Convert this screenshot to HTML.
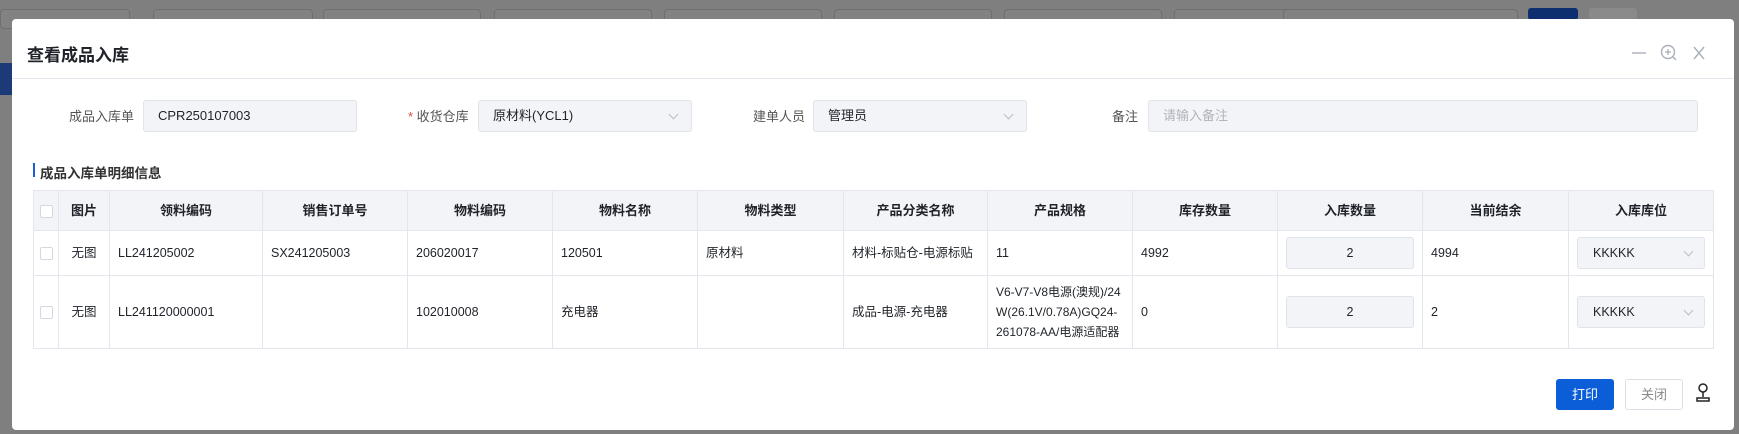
<!DOCTYPE html>
<html><head><meta charset="utf-8"><style>
*{box-sizing:border-box;margin:0;padding:0}
body{width:1739px;height:434px;overflow:hidden;background:#7f7f7f;font-family:"Liberation Sans","Noto Sans CJK SC",sans-serif;position:relative;color:#1f2329}
.a{position:absolute}
.bgbox{position:absolute;top:9px;height:20px;border:1px solid #6f6f6f;border-radius:4px;background:#828282}
.modal{position:absolute;left:12px;top:19px;width:1722px;height:411px;background:#fff;border-radius:4px}
.lbl{position:absolute;font-size:13px;color:#555;top:106px}
.inp{position:absolute;top:100px;height:32px;background:#f3f4f8;border:1px solid #dfe3ea;border-radius:3px;font-size:13px;line-height:30px;padding-left:14px;color:#1f2329}
.chev{position:absolute;width:7px;height:7px;border-right:1px solid #b8bcc4;border-bottom:1px solid #b8bcc4;transform:rotate(45deg)}
table{position:absolute;left:33px;top:190px;width:1680px;border-collapse:collapse;font-size:12.5px;table-layout:fixed}
td,th{border:1px solid #e3e6ec;padding:0 8px;text-align:left;vertical-align:middle;line-height:18px}
th{height:40px;background:#f3f4f8;font-weight:bold;text-align:center;font-size:13px}
.cb{width:13px;height:13px;border:1px solid #d5d8de;border-radius:2px;background:#fff;display:inline-block;vertical-align:middle}
.cell-in{height:32px;background:#f3f4f8;border:1px solid #dfe3ea;border-radius:3px;text-align:center;line-height:30px;position:relative}
</style></head><body>
<div class="bgbox" style="left:0;width:130px"></div>
<div class="bgbox" style="left:153px;width:160px"></div>
<div class="bgbox" style="left:323px;width:158px"></div>
<div class="bgbox" style="left:494px;width:158px"></div>
<div class="bgbox" style="left:664px;width:158px"></div>
<div class="bgbox" style="left:834px;width:158px"></div>
<div class="bgbox" style="left:1004px;width:158px"></div>
<div class="bgbox" style="left:1174px;width:120px"></div>
<div class="bgbox" style="left:1283px;width:235px"></div>
<div class="a" style="left:1528px;top:8px;width:50px;height:12px;background:#0e2f6f;border-radius:3px"></div>
<div class="a" style="left:1589px;top:8px;width:48px;height:12px;background:#8a8a8a;border-radius:3px"></div>
<div class="a" style="left:0;top:63px;width:12px;height:32px;background:#1d3a78"></div>

<div class="modal">
<div class="a" style="left:15px;top:22px;font-size:17px;font-weight:bold;color:#1f2329">查看成品入库</div>
<svg class="a" style="left:1618px;top:24px" width="80" height="20" viewBox="0 0 80 20">
<line x1="2" y1="10" x2="16" y2="10" stroke="#aab0b8" stroke-width="1.4"/>
<circle cx="38" cy="9" r="6.5" fill="none" stroke="#aab0b8" stroke-width="1.4"/>
<line x1="38" y1="6" x2="38" y2="12" stroke="#aab0b8" stroke-width="1.3"/><line x1="35" y1="9" x2="41" y2="9" stroke="#aab0b8" stroke-width="1.3"/>
<line x1="43" y1="14" x2="46" y2="17" stroke="#aab0b8" stroke-width="1.4"/>
<line x1="64" y1="4" x2="74" y2="16" stroke="#aab0b8" stroke-width="1.4"/><line x1="74" y1="4" x2="64" y2="16" stroke="#aab0b8" stroke-width="1.4"/>
</svg>
<div class="a" style="left:0;top:59px;width:1722px;height:1px;background:#e3e6ec"></div>
</div>

<div class="lbl" style="left:69px">成品入库单</div>
<div class="inp" style="left:143px;width:214px">CPR250107003</div>
<div class="lbl" style="left:408px"><span style="color:#e5483b">*</span> 收货仓库</div>
<div class="inp" style="left:478px;width:214px">原材料(YCL1)<span class="chev" style="right:14px;top:10px"></span></div>
<div class="lbl" style="left:753px">建单人员</div>
<div class="inp" style="left:813px;width:214px">管理员<span class="chev" style="right:14px;top:10px"></span></div>
<div class="lbl" style="left:1112px">备注</div>
<div class="inp" style="left:1148px;width:550px;color:#b0b4bb">请输入备注</div>

<div class="a" style="left:33px;top:163px;width:2px;height:14px;background:#1a5fd8"></div>
<div class="a" style="left:40px;top:162px;font-size:13.5px;font-weight:bold;color:#333">成品入库单明细信息</div>

<table>
<colgroup><col style="width:25px"><col style="width:51px"><col style="width:153px"><col style="width:145px"><col style="width:145px"><col style="width:145px"><col style="width:146px"><col style="width:144px"><col style="width:145px"><col style="width:145px"><col style="width:145px"><col style="width:146px"><col style="width:145px"></colgroup>
<tr><th style="padding:0;text-align:center"><span class="cb"></span></th><th style="padding:0">图片</th><th>领料编码</th><th>销售订单号</th><th>物料编码</th><th>物料名称</th><th>物料类型</th><th>产品分类名称</th><th>产品规格</th><th>库存数量</th><th>入库数量</th><th>当前结余</th><th>入库库位</th></tr>
<tr style="height:45px"><td style="padding:0;text-align:center"><span class="cb"></span></td><td style="padding:0;text-align:center">无图</td><td>LL241205002</td><td>SX241205003</td><td>206020017</td><td>120501</td><td>原材料</td><td>材料-标贴仓-电源标贴</td><td>11</td><td>4992</td><td><div class="cell-in">2</div></td><td>4994</td><td><div class="cell-in" style="text-align:left;padding-left:15px">KKKKK<span class="chev" style="right:12px;top:10px"></span></div></td></tr>
<tr style="height:73px"><td style="padding:0;text-align:center"><span class="cb"></span></td><td style="padding:0;text-align:center">无图</td><td>LL241120000001</td><td></td><td>102010008</td><td>充电器</td><td></td><td>成品-电源-充电器</td><td style="font-size:12px;line-height:20px;word-break:break-all">V6-V7-V8电源(澳规)/24W(26.1V/0.78A)GQ24-261078-AA/电源适配器</td><td>0</td><td><div class="cell-in">2</div></td><td>2</td><td><div class="cell-in" style="text-align:left;padding-left:15px">KKKKK<span class="chev" style="right:12px;top:10px"></span></div></td></tr>
</table>

<div class="a" style="left:1556px;top:379px;width:58px;height:31px;background:#0b5ed7;border-radius:3px;color:#fff;font-size:13px;text-align:center;line-height:31px">打印</div>
<div class="a" style="left:1625px;top:379px;width:58px;height:31px;border:1px solid #dcdfe6;border-radius:3px;color:#888;font-size:13px;text-align:center;line-height:29px">关闭</div>
<svg class="a" style="left:1694px;top:382px" width="18" height="22" viewBox="0 0 18 22">
<circle cx="9" cy="6" r="4" fill="none" stroke="#222" stroke-width="1.5"/>
<path d="M9 10v5M3 16h12v3H3z" fill="none" stroke="#222" stroke-width="1.5"/>
</svg>
</body></html>
